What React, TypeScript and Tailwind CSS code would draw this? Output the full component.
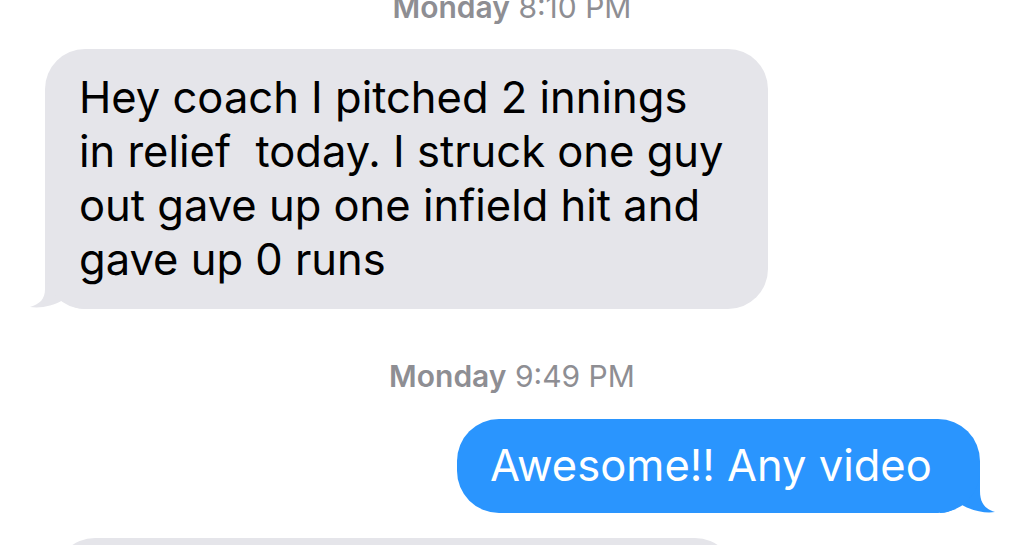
import React from "react";

// iMessage thread: incoming (grey) and outgoing (blue) bubbles with tails

function Timestamp({ day, time, className }: { day: string; time: string; className?: string }) {
  return (
    <div className={`text-center text-[30px] leading-[36px] text-[#8e8e93] ${className ?? ""}`}>
      <span className="font-semibold">{day}</span> {time}
    </div>
  );
}

function GreyTail() {
  return (
    <svg
      className="absolute left-[-20px] bottom-0 w-[60px] h-[50px]"
      viewBox="0 0 60 50"
      aria-hidden="true"
    >
      <path
        d="M20,0 L20,30 C20,40 15,45 5,48 C16,49.5 28,47 38,41 C45,47 52,50 60,50 L60,0 Z"
        fill="#e5e5ea"
      />
    </svg>
  );
}

function BlueTail() {
  return (
    <svg
      className="absolute right-[-20px] bottom-0 w-[60px] h-[50px]"
      viewBox="0 0 60 50"
      aria-hidden="true"
    >
      <path
        d="M40,0 L40,28 C40,40 45,46 55,49 C45,50.5 32,48 20,41 C14,47 8,50 0,50 L0,0 Z"
        fill="#2a95fe"
      />
    </svg>
  );
}

export default function App() {
  return (
    <div
      className="w-full h-[545px] overflow-hidden bg-white flex flex-col"
      style={{ fontFamily: "Inter, 'Open Sans', sans-serif" }}
    >
      <Timestamp day="Monday" time="8:10 PM" className="mt-[-11px]" />

      {/* incoming */}
      <div className="mt-[24px] ml-[45px] self-start relative">
        <GreyTail />
        <div className="relative w-[723px] h-[260px] rounded-[40px] bg-[#e5e5ea] pl-[34px] pt-[21px] text-[43.5px] leading-[54px] text-black whitespace-pre-wrap">
          Hey coach I pitched 2 innings{"\n"}in relief  today. I struck one guy{"\n"}out gave up one infield hit and{"\n"}gave up 0 runs
        </div>
      </div>

      <Timestamp day="Monday" time="9:49 PM" className="mt-[49px]" />

      {/* outgoing */}
      <div className="mt-[25px] ml-[457px] self-start relative">
        <BlueTail />
        <div className="relative w-[523px] h-[94px] rounded-[42px] bg-[#2a95fe] pl-[33px] flex items-center text-[43.5px] text-white">
          Awesome!! Any video
        </div>
      </div>

      {/* next incoming, cut off */}
      <div className="mt-[25px] ml-[55px] w-[680px] h-[120px] shrink-0 rounded-[40px] bg-[#e5e5ea]" />
    </div>
  );
}
